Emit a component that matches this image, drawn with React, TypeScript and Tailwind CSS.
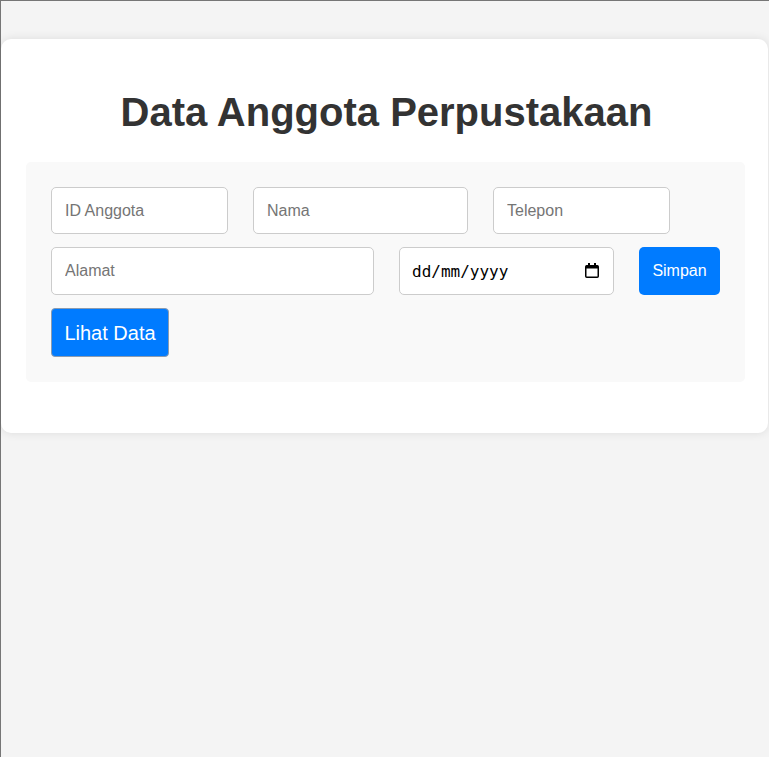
import React from 'react';

// Form data anggota perpustakaan
export default function App() {
  const inputCls =
    "h-[47px] rounded-[5px] border border-[#cccccc] bg-white px-3 text-[16px] text-[#333] placeholder:text-[#757575] outline-none";

  return (
    <div
      className="min-h-[757px] bg-[#f4f4f4] border-t border-l border-[#767676] pt-[38px]"
      style={{ fontFamily: '"Liberation Sans", Arial, sans-serif' }}
    >
      <div className="w-[767px] rounded-[10px] bg-white shadow-[0_0_10px_rgba(0,0,0,0.1)] pt-[50px] pb-[51px] pl-[25px]">
        <h1 className="text-center text-[40px] leading-[46px] font-bold text-[#333] mb-[27px] pr-[21px]">
          Data Anggota Perpustakaan
        </h1>

        <form className="w-[719px] rounded-[5px] bg-[#f9f9f9] p-[25px] flex flex-col gap-[13px]">
          <div className="flex gap-[25px]">
            <input type="text" placeholder="ID Anggota" className={`${inputCls} w-[177px] pl-[13px]`} />
            <input type="text" placeholder="Nama" className={`${inputCls} w-[215px] pl-[13px]`} />
            <input type="text" placeholder="Telepon" className={`${inputCls} w-[177px] pl-[13px]`} />
          </div>
          <div className="flex gap-[25px]">
            <input type="text" placeholder="Alamat" className={`${inputCls} w-[323px] h-[48px] pl-[13px]`} />
            {/* tanggal: dd/mm/yyyy dengan ikon kalender */}
            <div className="relative w-[215px] h-[48px]">
              <input
                type="text"
                placeholder="dd/mm/yyyy"
                className={`${inputCls} w-full h-[48px] text-black placeholder:text-black`}
                style={{ fontFamily: '"DejaVu Sans Mono", monospace' }}
              />
              <svg
                viewBox="0 0 14 15"
                className="absolute right-[15px] top-[16px] w-[14px] h-[15px] pointer-events-none"
              >
                <rect x="3" y="0" width="2" height="3" fill="#000" />
                <rect x="9" y="0" width="2" height="3" fill="#000" />
                <rect x="0.75" y="2.75" width="12.5" height="11.5" rx="1" fill="none" stroke="#000" strokeWidth="1.5" />
                <rect x="1" y="2.5" width="12" height="3" fill="#000" />
              </svg>
            </div>
            <button
              type="button"
              className="w-[81px] h-[48px] rounded-[5px] bg-[#007bff] text-white text-[16px]"
            >
              Simpan
            </button>
          </div>
          <div className="flex">
            <button
              type="button"
              className="w-[118px] h-[49px] rounded-[4px] border border-[#8a9bb0] bg-[#007bff] text-white text-[20px]"
            >
              Lihat Data
            </button>
          </div>
        </form>
      </div>
    </div>
  );
}
